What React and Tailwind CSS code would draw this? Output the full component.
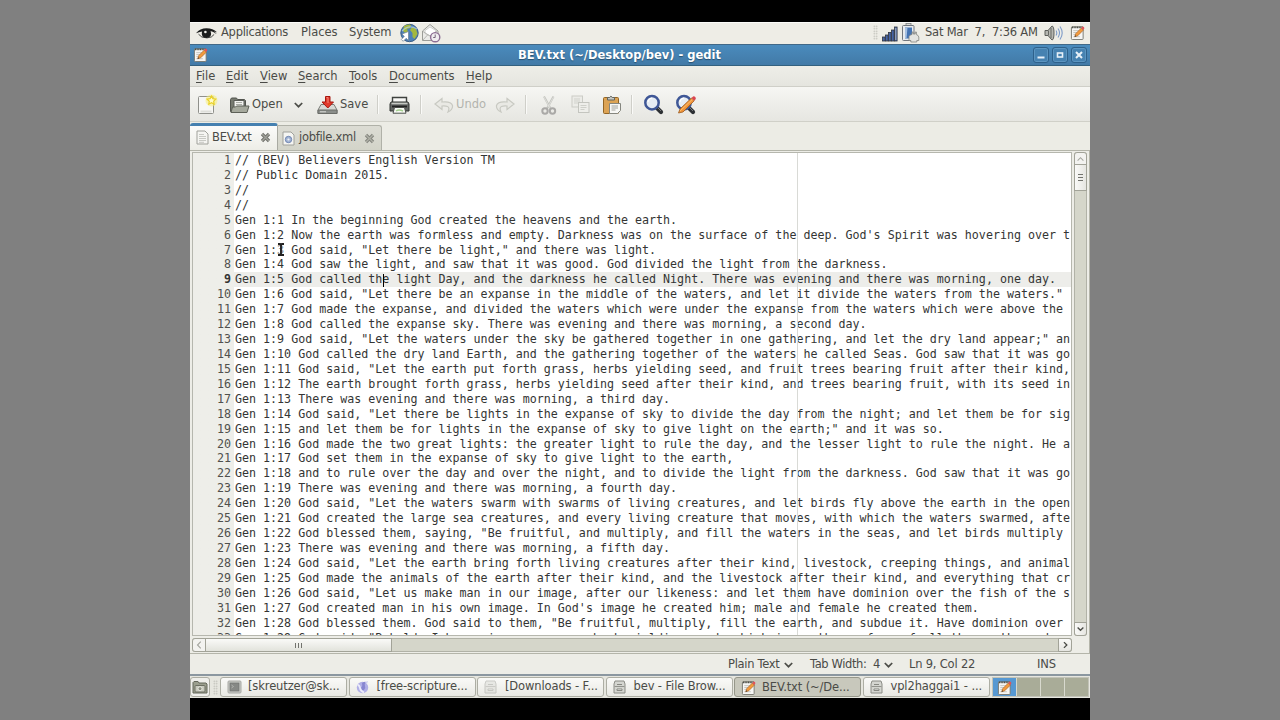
import { clsx } from 'clsx';

const lines = [
  '// (BEV) Believers English Version TM',
  '// Public Domain 2015.',
  '//',
  '//',
  'Gen 1:1 In the beginning God created the heavens and the earth.',
  "Gen 1:2 Now the earth was formless and empty. Darkness was on the surface of the deep. God's Spirit was hovering over the",
  'Gen 1:3 God said, "Let there be light," and there was light.',
  'Gen 1:4 God saw the light, and saw that it was good. God divided the light from the darkness.',
  'Gen 1:5 God called the light Day, and the darkness he called Night. There was evening and there was morning, one day.',
  'Gen 1:6 God said, "Let there be an expanse in the middle of the waters, and let it divide the waters from the waters."',
  'Gen 1:7 God made the expanse, and divided the waters which were under the expanse from the waters which were above the',
  'Gen 1:8 God called the expanse sky. There was evening and there was morning, a second day.',
  'Gen 1:9 God said, "Let the waters under the sky be gathered together in one gathering, and let the dry land appear;" and',
  'Gen 1:10 God called the dry land Earth, and the gathering together of the waters he called Seas. God saw that it was good.',
  'Gen 1:11 God said, "Let the earth put forth grass, herbs yielding seed, and fruit trees bearing fruit after their kind,',
  'Gen 1:12 The earth brought forth grass, herbs yielding seed after their kind, and trees bearing fruit, with its seed in it',
  'Gen 1:13 There was evening and there was morning, a third day.',
  'Gen 1:14 God said, "Let there be lights in the expanse of sky to divide the day from the night; and let them be for signs',
  'Gen 1:15 and let them be for lights in the expanse of sky to give light on the earth;" and it was so.',
  'Gen 1:16 God made the two great lights: the greater light to rule the day, and the lesser light to rule the night. He also',
  'Gen 1:17 God set them in the expanse of sky to give light to the earth,',
  'Gen 1:18 and to rule over the day and over the night, and to divide the light from the darkness. God saw that it was good.',
  'Gen 1:19 There was evening and there was morning, a fourth day.',
  'Gen 1:20 God said, "Let the waters swarm with swarms of living creatures, and let birds fly above the earth in the open',
  'Gen 1:21 God created the large sea creatures, and every living creature that moves, with which the waters swarmed, after',
  'Gen 1:22 God blessed them, saying, "Be fruitful, and multiply, and fill the waters in the seas, and let birds multiply',
  'Gen 1:23 There was evening and there was morning, a fifth day.',
  'Gen 1:24 God said, "Let the earth bring forth living creatures after their kind, livestock, creeping things, and animals',
  'Gen 1:25 God made the animals of the earth after their kind, and the livestock after their kind, and everything that creeps',
  'Gen 1:26 God said, "Let us make man in our image, after our likeness: and let them have dominion over the fish of the sea',
  "Gen 1:27 God created man in his own image. In God's image he created him; male and female he created them.",
  'Gen 1:28 God blessed them. God said to them, "Be fruitful, multiply, fill the earth, and subdue it. Have dominion over',
  'Gen 1:29 God said, "Behold, I have given you every herb yielding seed, which is on the surface of all the earth, and',
];

const CURRENT_LINE = 9;
const VISIBLE_COLS = 119;

const menus = [
  { label: 'File', width: 'w-[30px]' },
  { label: 'Edit', width: 'w-[34px]' },
  { label: 'View', width: 'w-[38px]' },
  { label: 'Search', width: 'w-[51px]' },
  { label: 'Tools', width: 'w-[40px]' },
  { label: 'Documents', width: 'w-[77px]' },
  { label: 'Help', width: 'w-[40px]' },
];

const tasks = [
  { label: '[skreutzer@sk...', icon: 'terminal' },
  { label: '[free-scripture...', icon: 'globe' },
  { label: '[Downloads - F...', icon: 'drawerDim' },
  { label: 'bev - File Brow...', icon: 'drawer' },
  { label: 'BEV.txt (~/De...', icon: 'notepad', active: true },
  { label: 'vpl2haggai1 - ...', icon: 'drawer' },
];

/* ---------- icons ---------- */

const Notepad = ({ size = 15 }) => (
  <svg width={size} height={size} viewBox="0 0 16 16" className="shrink-0">
    <rect x="1.5" y="2" width="12.500" height="13.500" rx="1" fill="#f6f6f4" stroke="#77786f" />
    <path d="M2 2.500h11.500" stroke="#4e5049" strokeWidth="1.8" strokeDasharray="1.200 .6" />
    <path d="M3.500 6h6M3.500 8h4M3.500 10h3M3.500 12.500h7" stroke="#b7b8b1" strokeWidth=".8" />
    <path d="M5 12.500l1-3.200 6-6 2.200 2.200-6 6z" fill="#f39a3c" stroke="#a7652a" strokeWidth=".7" />
    <path d="M12 3.200l1.400-1.600q1.800-.2 2 1.900l-1.300 1.800z" fill="#e0525a" />
    <path d="M5 12.500l.5-1.600 1.200 1.100z" fill="#333" />
  </svg>
);

const Eye = () => (
  <svg width="21" height="12" viewBox="0 0 21 12">
    <path d="M0 6.200Q4 1.200 10.500 1.200T21 5.200L18 4.600Q20 6 20.600 7 17 4.400 14.600 4.100 16.600 10.600 10.600 11 4.600 10.800 6 4.600 3 5.200 0 6.200z" fill="#1b1d1d" />
    <path d="M2.500 7.200Q5 11 11 10.900 16 10.800 18.200 7.400" fill="none" stroke="#1b1d1d" strokeWidth=".8" />
    <circle cx="9.400" cy="5" r="1.300" fill="#eeede8" />
  </svg>
);

const Globe = () => (
  <svg width="20" height="20" viewBox="0 0 20 20">
    <circle cx="10.500" cy="10" r="8.700" fill="#4d81b8" stroke="#3b5d83" />
    <path d="M5 3q4-2.500 7-1l-1 3-3 1 1 3-3 1-2-2zM13 4l4 2 1.500 5-3 5-2-2 0-4-2.500-3z" fill="#a4b83e" />
    <path d="M3 8q7-7 15-2" stroke="#b6d2ea" strokeWidth="1.200" fill="none" opacity=".7" />
    <path d="M9.500 8.500v9l-2.300-2.200-3 3-1.900-1.900 3-3-2.300-2.400z" fill="#fff" stroke="#6d7f90" strokeWidth=".7" />
  </svg>
);

const Mail = () => (
  <svg width="20" height="20" viewBox="0 0 20 20">
    <path d="M1.500 8L9 1.500 17 8v9.500H1.500z" fill="#ebebe8" stroke="#9b9c97" />
    <path d="M4 7.500L9 4l6 3.500-1 3-5 2.500-5-2.500z" fill="#fff" stroke="#bfc0bb" strokeWidth=".7" />
    <path d="M1.500 17.500L7 11.500M2 8.500l7 4.500 7-5" stroke="#a9aaa5" strokeWidth=".8" fill="none" />
    <circle cx="14.200" cy="14.200" r="4.600" fill="#efecef" stroke="#8c6d93" strokeWidth="1.400" />
    <path d="M14.200 11.500v3h-2" stroke="#75647a" fill="none" />
  </svg>
);

const Signal = () => (
  <svg width="16" height="16" viewBox="0 0 16 16">
    {[[0.5, 11, 4], [3.5, 9, 6], [6.5, 6.5, 8.5], [9.5, 4, 11], [12.5, 1, 14]].map(([x, y, h]) => (
      <rect key={x} x={x} y={y} width="2.600" height={h} fill="#4665a5" stroke="#30353d" strokeWidth=".8" />
    ))}
    <path d="M13.800 2v12" stroke="#b9bdc5" strokeWidth=".9" />
  </svg>
);

const Battery = () => (
  <svg width="19" height="20" viewBox="0 0 19 20">
    <rect x="5" y="0.500" width="5" height="3" fill="#dadbd8" stroke="#7c7f80" strokeWidth=".8" />
    <rect x="1.500" y="2.500" width="11.500" height="15" rx="1" fill="#e9ecef" stroke="#72777d" />
    <path d="M4 4.500h7v11H4z" fill="#4574b3" />
    <path d="M4 4.500h2.500l-1 11H4z" fill="#a6c1e2" />
    <path d="M8 17.500v-4q1-2 3-2V9h1.200v2h2V9h1.200v2.600q2 .5 2.400 2.400v3.500h-2V19h-6v-1.500z" fill="#e4e4e1" stroke="#82837f" strokeWidth=".8" />
  </svg>
);

const Speaker = () => (
  <svg width="20" height="18" viewBox="0 0 20 18">
    <path d="M1 6.500h3L8 2q2 .2 2 7t-2 7l-4-4.500H1z" fill="#b5b6b1" stroke="#5d5f5b" />
    <path d="M4.500 6.500v5M7 4v10" stroke="#666862" />
    <path d="M12 6.500q1.600 2.500 0 5M14 4.500q3 4.500 0 9M16 2.500q4.400 6.500 0 13" fill="none" stroke="#7f9cc8" strokeWidth="1.100" />
  </svg>
);

const NewDoc = () => (
  <svg width="21" height="21" viewBox="0 0 21 21">
    <rect x="1.500" y="2.500" width="15" height="17" rx="1" fill="#f7f7f5" stroke="#8f908b" />
    <path d="M3.500 17.500h11" stroke="#dedfda" strokeWidth="2" />
    <circle cx="14.500" cy="6.500" r="6" fill="#f8ee75" opacity=".55" />
    <path d="M14.500 2l1.300 2.600 3 .5-2.100 2.100.4 3-2.600-1.400-2.700 1.400.5-3-2.200-2.100 3-.5z" fill="#fffbc9" stroke="#ead127" strokeWidth="1.200" />
  </svg>
);

const OpenFolder = () => (
  <svg width="21" height="18" viewBox="0 0 21 18">
    <path d="M1.500 15.500v-12l1-1.500h5l1 1.500h7l1 1v11z" fill="#777a70" stroke="#53554f" />
    <path d="M5 4.500h10v8H5z" fill="#f2f2ef" stroke="#5b5d57" />
    <path d="M7 6.500h6M7 8.500h6" stroke="#aaaca5" />
    <path d="M3.500 11h3l1-1h12.500l-2 6.500H2z" fill="#a6a99d" stroke="#5d6057" />
  </svg>
);

const SaveIcon = () => (
  <svg width="21" height="20" viewBox="0 0 21 20">
    <path d="M4 9.500h13l3 5.500v3.500H1V15z" fill="#d7d8d4" stroke="#7b7d78" />
    <path d="M1 15h19v3.500H1z" fill="#8b8e8b" stroke="#6b6d69" />
    <path d="M3 16.800h6" stroke="#d9dad7" />
    <path d="M8.500 1.500h4.500v5.500h3.500L10.800 13 5 7h3.500z" fill="#e23a2c" stroke="#a6170f" />
    <path d="M9.500 2.500h1.500V8" stroke="#f5877b" fill="none" />
  </svg>
);

const Printer = () => (
  <svg width="21" height="20" viewBox="0 0 21 20">
    <path d="M3.500 8V2.500h14V8" fill="#f8f8f6" stroke="#3f423f" strokeWidth="1.400" />
    <path d="M2 7h17l1 2v7H1V9z" fill="#646765" stroke="#313431" />
    <path d="M2.500 8.500h16" stroke="#c5c8c3" strokeWidth="1.600" />
    <path d="M3 11.500h15" stroke="#222" strokeWidth="1.800" />
    <path d="M5.500 12.500h10l1.500 5.700H4z" fill="#f8faf5" stroke="#4b4e4a" />
    <path d="M7 16q3-2 7 0" stroke="#a4cf8f" strokeWidth="1.500" fill="none" />
  </svg>
);

const Arrow = ({ flip }) => (
  <svg width="20" height="16" viewBox="0 0 20 16" className={clsx('shrink-0', flip && '-scale-x-100')}>
    <path d="M1 7l7-5.500V5q9-1 10.500 3.500.5 4-4.500 6.500 2-4.500-.5-5.500-2-.8-5.500-.5v3.500z" fill="#e9e9e4" stroke="#c8c9c2" strokeWidth="1.200" />
  </svg>
);

const Cut = () => (
  <svg width="18" height="20" viewBox="0 0 18 20">
    <path d="M4 1.500l6.500 12M13.500 1.500L7 13.500" stroke="#c2c3be" strokeWidth="2" />
    <path d="M4 2l6 11M13.500 2L8 12" stroke="#e5e5e1" strokeWidth=".8" />
    <circle cx="5" cy="16" r="2.700" fill="none" stroke="#aaa9a7" strokeWidth="2" />
    <circle cx="12.500" cy="16" r="2.700" fill="none" stroke="#aaa9a7" strokeWidth="2" />
  </svg>
);

const Copy = () => (
  <svg width="19" height="19" viewBox="0 0 19 19">
    <rect x="1" y="1" width="10.500" height="11" fill="#ecece8" stroke="#cbccc6" />
    <path d="M3 4h6M3 6h6M3 8h4" stroke="#d0d1cb" />
    <rect x="7.500" y="7.500" width="10.500" height="10" fill="#eeeeea" stroke="#c4c5bf" />
    <path d="M9.500 10.500h6M9.500 12.500h6M9.500 14.500h4" stroke="#cfd0ca" />
  </svg>
);

const Paste = () => (
  <svg width="20" height="20" viewBox="0 0 20 20">
    <rect x="1.500" y="2.500" width="15" height="16" rx="1" fill="#dca354" stroke="#936524" />
    <path d="M5.500 5V2.500h2q1.300-2.500 3 0h2V5z" fill="#c5c7c3" stroke="#61645f" />
    <path d="M7.500 8.500h11v7l-3 3h-8z" fill="#f7f7f5" stroke="#85867f" />
    <path d="M9.500 11h6.500M9.500 13h6.500M9.500 15h4" stroke="#a1a29c" />
  </svg>
);

const Find = ({ pencil }) => (
  <svg width="22" height="21" viewBox="0 0 22 21">
    <path d="M13.500 13.500l4.500 4.500" stroke="#2c2f33" strokeWidth="4.200" strokeLinecap="round" />
    <path d="M15 14l3 3" stroke="#777a7c" strokeWidth="1" />
    <circle cx="9" cy="8.700" r="6.700" fill="#e7edf4" stroke="#3f5796" strokeWidth="2.500" />
    <path d="M5 8q.6-3.500 4-4" stroke="#fff" strokeWidth="1.200" fill="none" />
    {pencil && (
      <g>
        <path d="M3.500 19l1.500-4L16.500 4l2.700 2.800L8 18z" fill="#f1943a" stroke="#9b5a20" strokeWidth=".8" />
        <path d="M5 17L17.500 5.300" stroke="#fac06f" />
        <path d="M16.500 4l1.600-1.600q2.700-.3 2.700 2.700l-1.600 1.700z" fill="#da4650" />
      </g>
    )}
  </svg>
);

const Page = ({ badge }) => (
  <svg width="13" height="15" viewBox="0 0 13 15" className="shrink-0">
    <path d="M1 1h8l3 3v10H1z" fill="#f5f5f2" stroke="#a0a19b" />
    {badge ? (
      <>
        <circle cx="6.500" cy="8.500" r="3.200" fill="#a4b5d3" stroke="#6f86b4" />
        <circle cx="6.500" cy="8.500" r="1.100" fill="#f0f3f8" />
      </>
    ) : (
      <path d="M3 4.500h5M3 6.500h7M3 8.500h7M3 10.500h7M3 12.300h5" stroke="#c3c4be" strokeWidth=".9" />
    )}
  </svg>
);

const CloseX = ({ dim }) => (
  <svg width="11" height="11" viewBox="0 0 11 11" className="shrink-0">
    <path d="M2 2l7 7M9 2L2 9" stroke={dim ? '#85867f' : '#73746e'} strokeWidth="3.300" />
    <path d="M2 2l7 7M9 2L2 9" stroke={dim ? '#b0b1a7' : '#a0a19a'} strokeWidth="1.300" />
  </svg>
);

const Chevron = ({ className, color = '#4c4d48', width = 1.7 }) => (
  <svg width="9" height="6" viewBox="0 0 9 6" className={clsx('shrink-0', className)}>
    <path d="M.8 1l3.700 3.700L8.200 1" fill="none" stroke={color} strokeWidth={width} />
  </svg>
);

const Drawer = ({ dim }) => (
  <svg width="13" height="14" viewBox="0 0 13 14" opacity={dim ? 0.4 : 1}>
    <path d="M2 1h9l1 3v9H1V4z" fill="#d4d5d0" stroke="#8b8c86" />
    <path d="M1.500 6.500h10" stroke="#92938d" />
    <path d="M4 4.500h5M4 9h5v1.500H4z" stroke="#868781" fill="#fafaf8" />
  </svg>
);

const Terminal = () => (
  <svg width="15" height="14" viewBox="0 0 15 14">
    <rect x="1" y="1" width="13" height="12" rx="1" fill="#c8c9c5" stroke="#a8a9a4" />
    <rect x="3" y="3" width="9" height="8" fill="#868885" stroke="#70726f" strokeWidth=".7" />
    <path d="M4.500 5l2 1.500-2 1.500" stroke="#b4b5b1" fill="none" strokeWidth=".9" />
  </svg>
);

const IceGlobe = () => (
  <svg width="14" height="14" viewBox="0 0 14 14">
    <circle cx="6.500" cy="7.500" r="5.700" fill="#b0afe6" />
    <path d="M6 3q3-2 4-1-2 2-1 4t-1 4q-3 1-3-2 2-2 1-5z" fill="#8786d0" />
    <path d="M1.500 5q2 0 2.500 3t4 4.500" stroke="#ececfa" strokeWidth="1.800" fill="none" />
    <path d="M9 2l3-1-1 3z" fill="#cfcfef" />
  </svg>
);

const DesktopIcon = () => (
  <svg width="16" height="15" viewBox="0 0 16 15">
    <path d="M1 13V2.500L2 1.500h4l1 1.500h7l1 1v9z" fill="#9b9f8e" stroke="#65685b" />
    <rect x="3" y="5.500" width="10" height="6.500" rx="1" fill="#c8cabd" stroke="#6c6f62" />
    <circle cx="8" cy="8.700" r="2" fill="#8e9183" stroke="#f0f0ea" strokeWidth=".8" />
  </svg>
);

const taskIcons = {
  terminal: <Terminal />,
  globe: <IceGlobe />,
  drawer: <Drawer />,
  drawerDim: <Drawer dim />,
  notepad: <Notepad size={15} />,
};

/* ---------- small parts ---------- */

const Grip = () => (
  <div className="w-[5px] h-[15px] shrink-0 bg-[radial-gradient(circle,#b9bab2_0.7px,transparent_0.9px)] bg-[size:2.500px_2.500px]" />
);

const Separator = ({ className }) => (
  <div className={clsx('w-[2px] h-[19px] shrink-0 bg-[#cfcfc9] border-r border-[#fafaf8]', className)} />
);

const WindowButton = ({ children }) => (
  <div className="w-[16px] h-[16px] flex items-center justify-center rounded-[3px] border border-[#2e618b] bg-[#4682b1] shadow-[inset_0_0_0_1px_#5c95c0]">
    <svg width="10" height="10" viewBox="0 0 10 10" stroke="#e8f1f8" fill="none">{children}</svg>
  </div>
);

const TopPanel = () => (
  <div className="h-[22px] shrink-0 flex items-center justify-between bg-[#eeede6] border-t border-[#fbfbf9] pl-[6px] pr-[5px] pb-[2px]">
    <div className="flex items-center">
      <Eye />
      <span className="w-[80px] pl-[4px] tracking-[-0.270px]">Applications</span>
      <span className="w-[48px] pl-[4px]">Places</span>
      <span className="w-[54px] pl-[4px] tracking-[-0.100px]">System</span>
      <Globe />
      <div className="ml-[2px]"><Mail /></div>
    </div>
    <div className="flex items-center">
      <Grip />
      <div className="ml-[4px] mt-[2px]"><Signal /></div>
      <div className="ml-[3px]"><Battery /></div>
      <span className="w-[124px] pl-[5px] tracking-[-0.220px] whitespace-pre">Sat Mar  7,  7:36 AM</span>
      <Speaker />
      <div className="ml-[6px]"><Notepad size={15} /></div>
    </div>
  </div>
);

const TitleBar = () => (
  <div className="h-[22px] shrink-0 flex items-center bg-linear-to-b from-[#4a8bbd] to-[#427aa7] border-t border-t-[#416887] border-b border-b-[#33617f] pl-[3px] pr-[3px]">
    <div className="pb-px"><Notepad size={15} /></div>
    <p className="flex-1 pr-[2px] pt-[2px] text-center text-[11.500px] font-bold text-white [text-shadow:0_1px_1px_#28506f]">
      BEV.txt (~/Desktop/bev) - gedit
    </p>
    <div className="flex gap-[3px]">
      <WindowButton><path d="M1.500 7.500h7" strokeWidth="2" /></WindowButton>
      <WindowButton><rect x="2.500" y="3" width="5" height="4" strokeWidth="1.600" /></WindowButton>
      <WindowButton><path d="M2 2l6 6M8 2l-6 6" strokeWidth="2" /></WindowButton>
    </div>
  </div>
);

const MenuBar = () => (
  <div className="h-[21px] shrink-0 flex items-center bg-linear-to-b from-[#eeeee8] to-[#e5e5df] border-b border-[#cfcfc8] pl-[6px] pt-[2px]">
    {menus.map(({ label, width }) => (
      <span key={label} className={clsx('whitespace-nowrap', width)}>
        <span className="underline underline-offset-[2px]">{label[0]}</span>
        {label.slice(1)}
      </span>
    ))}
  </div>
);

const ToolBar = () => (
  <div className="h-[35px] shrink-0 flex items-center bg-linear-to-b from-[#f6f6f3] to-[#e6e6e1] border-b border-[#d0d0c8] pl-[7px] pt-[1px]">
    <div className="w-[32px]"><NewDoc /></div>
    <OpenFolder />
    <span className="w-[44px] pl-[2px] pt-[1px]">Open</span>
    <Chevron />
    <div className="ml-[14px]"><SaveIcon /></div>
    <span className="w-[39px] pl-[2px] pt-[1px]">Save</span>
    <Separator />
    <div className="ml-[10px]"><Printer /></div>
    <Separator className="ml-[10px]" />
    <div className="ml-[12px]"><Arrow /></div>
    <span className="w-[41px] pl-[2px] pt-[1px] text-[#b3b4ae]">Undo</span>
    <Arrow flip />
    <Separator className="ml-[10px]" />
    <div className="ml-[13px]"><Cut /></div>
    <div className="ml-[13px]"><Copy /></div>
    <div className="ml-[12px]"><Paste /></div>
    <Separator className="ml-[9px]" />
    <div className="ml-[10px]"><Find /></div>
    <div className="ml-[10px]"><Find pencil /></div>
  </div>
);

const Tabs = () => (
  <div className="h-[27px] shrink-0 flex items-end bg-[#ecece5]">
    <div className="w-[88px] h-[27px] flex items-center rounded-t-[3px] border-r border-[#a9aaa2] border-t-[3px] border-t-[#4580b0] bg-linear-to-b from-[#fbfbfa] to-[#ededE7] pl-[6px] pb-[2px]">
      <Page />
      <span className="w-[51px] pl-[3px] pt-[2px] tracking-[-0.200px]">BEV.txt</span>
      <CloseX />
    </div>
    <div className="w-[104px] h-[25px] flex items-center rounded-tr-[3px] border-t border-r border-[#b0b1a8] bg-linear-to-b from-[#dcdcd4] to-[#d3d4c9] pl-[4px]">
      <Page badge />
      <span className="w-[69px] pl-[4px] tracking-[-0.280px]">jobfile.xml</span>
      <CloseX dim />
    </div>
  </div>
);

const Editor = () => (
  <div className="relative w-[880px] h-[484px] overflow-hidden border border-[#b6b7ae] bg-linear-to-r from-[#eeeee9] from-[41px] to-white to-[41px]">
    <div className="font-['DejaVu_Sans_Mono',monospace] text-[11.670px] leading-[14.935px] text-[#343534]">
      {lines.map((line, idx) => {
        const current = idx + 1 === CURRENT_LINE;
        return (
          <div key={idx} className="flex h-[14.935px]">
            <div className={clsx('w-[38px] shrink-0 text-right', current ? 'font-bold' : 'text-[#50514d]')}>{idx + 1}</div>
            <div className={clsx('flex-1 ml-[3px] pl-[1px] whitespace-pre', current && 'bg-[#ededea]')}>
              {line.slice(0, VISIBLE_COLS)}
            </div>
          </div>
        );
      })}
    </div>
    {/* right margin, caret and mouse pointer */}
    <div className="absolute left-[604px] top-0 h-full w-px bg-[#d9dad6]" />
    <div className="absolute left-[190px] top-[121px] h-[13px] w-px bg-black" />
    <svg className="absolute left-[84px] top-[89px]" width="8" height="15" viewBox="0 0 8 15">
      <path d="M1 2h2l1 1 1-1h2M4 3v9M1 13h2l1-1 1 1h2" fill="none" stroke="#fff" strokeWidth="3.500" opacity=".6" />
      <path d="M1 2h2l1 1 1-1h2M4 3v9M1 13h2l1-1 1 1h2" fill="none" stroke="#222" strokeWidth="1.900" />
    </svg>
  </div>
);

const scrollPart = 'flex items-center justify-center border border-[#a2a398] shrink-0';

const VerticalScroll = () => (
  <div className="w-[13px] h-[484px] flex flex-col rounded-[3px] bg-[#d5d6ca] border-x border-[#b1b2a7]">
    <div className={clsx(scrollPart, '-mx-px h-[13px] rounded-t-[3px] bg-[#f3f3f0]')}>
      <Chevron className="w-[7px] rotate-180" color="#a3a49d" width={1.3} />
    </div>
    <div className={clsx(scrollPart, '-mx-px -mt-px h-[27px] flex-col gap-[2px] bg-linear-to-r from-[#fafaf8] to-[#e6e6e1]')}>
      <i className="w-[5px] h-px bg-[#72736d]" />
      <i className="w-[5px] h-px bg-[#72736d]" />
      <i className="w-[5px] h-px bg-[#72736d]" />
    </div>
    <div className={clsx(scrollPart, '-mx-px mt-auto h-[14px] rounded-b-[3px] bg-linear-to-r from-[#fafaf8] to-[#e6e6e1]')}>
      <Chevron className="w-[7px]" />
    </div>
  </div>
);

const HorizontalScroll = () => (
  <div className="w-[880px] h-[14px] flex rounded-[3px] bg-[#d5d6ca] border-y border-[#b1b2a7]">
    <div className={clsx(scrollPart, '-my-px w-[14px] rounded-l-[3px] bg-[#f3f3f0]')}>
      <Chevron className="rotate-90 w-[8px]" color="#a3a49d" width={1.2} />
    </div>
    <div className={clsx(scrollPart, '-my-px -ml-px w-[187px] gap-[2px] bg-linear-to-b from-[#fafaf8] to-[#e2e3dc]')}>
      <i className="h-[5px] w-px bg-[#72736d]" />
      <i className="h-[5px] w-px bg-[#72736d]" />
      <i className="h-[5px] w-px bg-[#72736d]" />
    </div>
    <div className={clsx(scrollPart, '-my-px ml-auto w-[14px] rounded-r-[3px] bg-linear-to-b from-[#fafaf8] to-[#e6e6e1]')}>
      <Chevron className="-rotate-90 w-[7px]" />
    </div>
  </div>
);

const StatusBar = () => (
  <div className="h-[20px] shrink-0 flex items-center bg-[#edede7] pl-[538px] pt-[1px] whitespace-nowrap">
    <span className="w-[56px] tracking-[-0.300px]">Plain Text</span>
    <Chevron />
    <span className="w-[74px] ml-[17px] tracking-[-0.400px] whitespace-pre">Tab Width:  4</span>
    <Chevron />
    <span className="w-[128px] ml-[16px] tracking-[-0.200px]">Ln 9, Col 22</span>
    <span className="tracking-[-0.100px]">INS</span>
  </div>
);

const TaskBar = () => (
  <div className="h-[24px] shrink-0 flex items-center bg-[#e6e6df] border-t-2 border-t-[#8b97a0] pr-px">
    <div className="w-[20px] h-[20px] flex items-center justify-center rounded-[3px] border border-[#adaea4] bg-[#efefeb]">
      <DesktopIcon />
    </div>
    <div className="ml-[3px]"><Grip /></div>
    <div className="flex gap-[1.500px] ml-[2px]">
      {tasks.map(({ label, icon, active }) => (
        <div
          key={label}
          className={clsx(
            'w-[127px] h-[20px] flex items-center rounded-[3px] border pl-[6px]',
            active ? 'bg-[#c8c8bc] border-[#96978a] pt-px' : 'bg-linear-to-b from-[#fafaf8] to-[#e9e9e4] border-[#adaea4] pb-px'
          )}
        >
          <span className="w-[21px] shrink-0">{taskIcons[icon]}</span>
          <span className="whitespace-nowrap tracking-[-0.120px]">{label}</span>
        </div>
      ))}
    </div>
    <div className="flex gap-px ml-auto h-[20px] border border-[#c2c3b8] bg-[#d8d9ce]">
      <div className="w-[23px] flex items-center justify-center bg-[#5698d2]"><Notepad size={15} /></div>
      <div className="w-[23px] bg-[#a9ac98]" />
      <div className="w-[23px] bg-[#a9ac98]" />
      <div className="w-[23px] bg-[#a9ac98]" />
    </div>
  </div>
);

export default function App() {
  return (
    <div className="w-[1280px] h-[720px] overflow-hidden flex justify-center bg-[#808080]">
      <div className="w-[900px] flex flex-col bg-black pt-[22px] font-['DejaVu_Sans',sans-serif] text-[11.500px] text-[#4a4b47]">
        <TopPanel />
        <TitleBar />
        <MenuBar />
        <ToolBar />
        <div className="h-px shrink-0 bg-[#ecece5]" />
        <Tabs />
        <div className="h-[504px] shrink-0 flex flex-col gap-[2px] bg-[#edede7] border-t border-r border-b border-[#b4b5aa] pl-[2px] pt-[1px]">
          <div className="flex gap-[2px]">
            <Editor />
            <VerticalScroll />
          </div>
          <HorizontalScroll />
        </div>
        <StatusBar />
        <TaskBar />
      </div>
    </div>
  );
}
